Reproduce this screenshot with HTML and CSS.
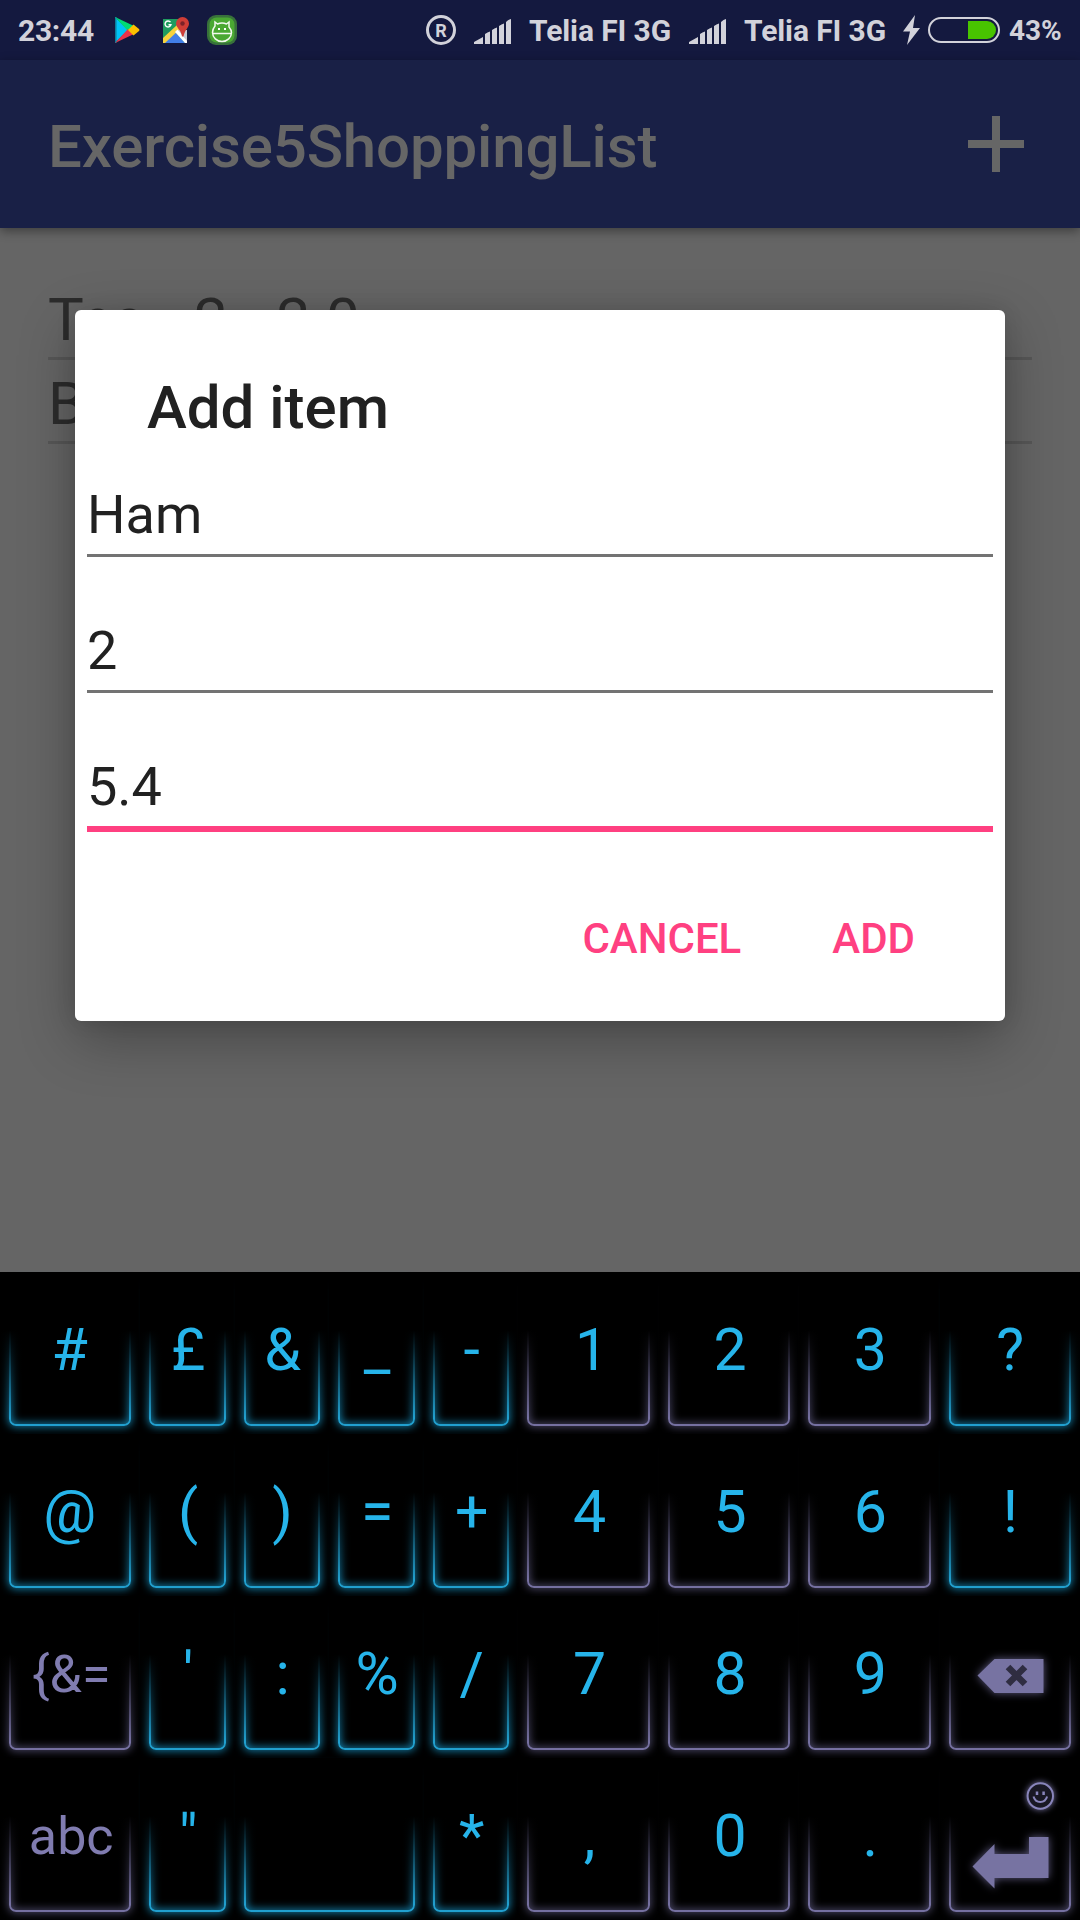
FILE: index.html
```html
<!DOCTYPE html>
<html lang="en">
<head>
<meta charset="utf-8">
<title>Exercise5ShoppingList</title>
<link rel="stylesheet" href="styles.css">
</head>
<body>
<div class="screen">
  <header class="status">
    <span class="clock">23:44</span>
    <svg class="ic-play" width="26" height="28" viewBox="0 0 26 28"><path fill="#00c3f5" d="M1 1v26l13-13z"/><path fill="#0b7f9b" d="M1 1h1.500v26H1z"/><path fill="#00dc74" d="M1 1l19 9-6 5z"/><path fill="#ea3348" d="M1 27l19-9-6-5z"/><path fill="#fcc000" d="M19.500 8.500L25 13q1 1 0 2l-5.500 4.500L14 14z"/></svg>
    <svg class="ic-maps" width="28" height="28" viewBox="0 0 28 28"><path fill="#1f9c5f" d="M2 3h22v24H2z"/><path fill="#c9cbd3" d="M16 14h10v12l-2 1z"/><path fill="#427fe8" d="M3 27l11-11 10 11z"/><path fill="#f7d33c" d="M2 22L16 9l3 4L4 27H2z"/><path fill="#fff" d="M14 16l2.500-2.500L26 25v2h-2z"/><path fill="none" stroke="#fff" stroke-width="1.400" d="M9.500 6.200a3 3 0 1 0 .5 2.500H7.500"/><path fill="#cf3d36" d="M21.500 1a6.500 6.500 0 0 1 6.500 6.500c0 4-4 6-5.500 13h-1.500c-1-7-6-9-6-13A6.500 6.500 0 0 1 21.500 1z"/><circle cx="21.500" cy="7.500" r="2.200" fill="#7b2228"/></svg>
    <svg class="ic-robot" width="30" height="30" viewBox="0 0 30 30"><rect width="30" height="30" rx="9" fill="#38713b"/><rect x="2.500" y="2.500" width="25" height="25" rx="7" fill="#4aa832"/><g fill="none" stroke="#f2f8ee" stroke-width="1.500"><path d="M8 11V7l2.500 2q4.500-2 9 0L22 7v5q2.500 3 2.500 5.500a9.500 9 0 0 1-19 0Q5.500 14 8 11z"/><path d="M6 18.500h18"/></g><path fill="#fff" d="M11 13h2v2h-2zM17 13h2v2h-2z"/></svg>
    <span class="registered">R</span>
    <svg class="signal" width="38" height="26" viewBox="0 0 38 26"><path d="M0 26v-2l9-5v7zM11 26V16q2.500-2 5-2.500V26zM18 26V12q2.500-2 5-2.500V26zM25 26V8q2.500-2 5-2.500V26zM32 26V4q2.500-2.500 5-3v25z"/></svg>
    <span class="carrier">Telia FI 3G</span>
    <svg class="signal signal-second" width="38" height="26" viewBox="0 0 38 26"><path d="M0 26v-2l9-5v7zM11 26V16q2.500-2 5-2.500V26zM18 26V12q2.500-2 5-2.500V26zM25 26V8q2.500-2 5-2.500V26zM32 26V4q2.500-2.500 5-3v25z"/></svg>
    <span class="carrier">Telia FI 3G</span>
    <svg class="bolt" width="18" height="30" viewBox="0 0 18 30"><path d="M12 0L0 16.500h7L4 30 17 13h-7z"/></svg>
    <span class="battery"><span class="battery-level"></span></span>
    <span class="percent">43%</span>
  </header>

  <div class="appbar">
    <h1 class="app-title">Exercise5ShoppingList</h1>
    <svg class="plus" width="56" height="56" viewBox="0 0 56 56"><path d="M24 0h8v24h24v8H32v24h-8V32H0v-8h24z"/></svg>
  </div>

  <main class="content">
    <div class="list-row">Tea - 2 - 2.0</div>
    <div class="list-row">B</div>
    <section class="dialog">
      <h2 class="dialog-title">Add item</h2>
      <div class="field">Ham</div>
      <div class="field">2</div>
      <div class="field field-focused">5.4</div>
      <div class="actions"><span class="action">CANCEL</span><span class="action">ADD</span></div>
    </section>
  </main>

  <div class="keyboard">
    <div class="key wide"><span>#</span></div>
    <div class="key"><span>£</span></div>
    <div class="key"><span>&amp;</span></div>
    <div class="key"><span>_</span></div>
    <div class="key"><span>-</span></div>
    <div class="key dim one"><span>1</span></div>
    <div class="key dim"><span>2</span></div>
    <div class="key dim"><span>3</span></div>
    <div class="key"><span>?</span></div>

    <div class="key wide"><span>@</span></div>
    <div class="key"><span>(</span></div>
    <div class="key"><span>)</span></div>
    <div class="key"><span>=</span></div>
    <div class="key"><span>+</span></div>
    <div class="key dim"><span>4</span></div>
    <div class="key dim"><span>5</span></div>
    <div class="key dim"><span>6</span></div>
    <div class="key"><span>!</span></div>

    <div class="key dim mode"><span>{&amp;=</span></div>
    <div class="key"><span>'</span></div>
    <div class="key"><span>:</span></div>
    <div class="key"><span>%</span></div>
    <div class="key"><span>/</span></div>
    <div class="key dim"><span>7</span></div>
    <div class="key dim"><span>8</span></div>
    <div class="key dim"><span>9</span></div>
    <div class="key dim"><svg class="key-icon" width="140" height="162" viewBox="0 0 140 162"><path class="solid" d="M37.500 79.500L54.500 63H103.500v34H54.500z"/><path class="cross" d="M68 71l17 17M85 71L68 88"/></svg></div>

    <div class="key dim mode"><span>abc</span></div>
    <div class="key"><span>"</span></div>
    <div class="key space"></div>
    <div class="key"><span>*</span></div>
    <div class="key dim"><span>,</span></div>
    <div class="key dim"><span>0</span></div>
    <div class="key dim"><span>.</span></div>
    <div class="key dim"><svg class="key-icon" width="140" height="162" viewBox="0 0 140 162"><path class="solid" d="M32.500 108.500L54.500 86v10h34.500V79h19.500v41h-54v10.500z"/><g class="smile"><circle cx="100.300" cy="38" r="12.700"/><path d="M93.500 38.500q1.500 5.500 6.800 5.500t6.800-5.500"/><path class="eyes" d="M97 33.500v3.500M103.600 33.500v3.500"/></g></svg></div>
  </div>
</div>
</body>
</html>
```
FILE: styles.css
```css
* { box-sizing: border-box; }

body {
  margin: 0;
  background: #000;
  font-family: Roboto, "Liberation Sans", sans-serif;
}

.screen {
  width: 1080px;
  height: 1920px;
  display: flex;
  flex-direction: column;
  overflow: hidden;
}

/* Status bar */
.status {
  flex: none;
  height: 60px;
  padding-left: 18px;
  display: flex;
  align-items: center;
  background: #14193f;
  color: #d2d2da;
  font-size: 30px;
  font-weight: 700;
  letter-spacing: -.1px;
  line-height: 61px;
  white-space: nowrap;
}
.status > * { flex: none; }
.clock { width: 96px; letter-spacing: -.3px; }
.ic-maps { margin-left: 21px; }
.ic-robot { margin-left: 18px; }
.registered {
  width: 30px;
  height: 30px;
  margin-left: 189px;
  border: 3px solid #d2d2da;
  border-radius: 50%;
  font-size: 18px;
  line-height: 25px;
  text-align: center;
}
.signal { margin: 1px 0 0 18px; fill: #d2d2da; }
.carrier { width: 142px; margin-left: 17px; }
.signal-second { margin-left: 18px; }
.bolt { margin-left: 17px; fill: #d2d2da; }
.battery {
  width: 72px;
  height: 26px;
  margin-left: 7px;
  padding: 2px;
  display: flex;
  justify-content: flex-end;
  border: 2px solid #d2d2da;
  border-radius: 13px;
}
.battery-level {
  width: 28px;
  height: 18px;
  border-radius: 0 9px 9px 0;
  background: #48c400;
}
.percent { margin-left: 9px; font-size: 28px; }

/* App bar */
.appbar {
  position: relative;
  z-index: 1;
  flex: none;
  height: 168px;
  padding: 0 56px 0 48px;
  display: flex;
  align-items: center;
  justify-content: space-between;
  background: #192046;
  box-shadow: 0 3px 10px rgba(0, 0, 0, .4);
}
.app-title {
  margin: 6px 0 0;
  color: #666;
  font-size: 60px;
  font-weight: 500;
  letter-spacing: -.15px;
  line-height: 70px;
}
.plus { fill: #666; }

/* Dimmed list behind the dialog */
.content {
  position: relative;
  z-index: 0;
  flex: none;
  height: 1044px;
  padding: 48px 48px 0;
  background: #656565;
}
.list-row {
  height: 84px;
  border-bottom: 3px solid #575757;
  color: #2c2c2c;
  font-size: 60px;
  line-height: 87px;
  word-spacing: 1.2px;
}

.dialog {
  position: absolute;
  left: 75px;
  top: 82px;
  width: 930px;
  height: 711px;
  padding: 63px 12px 0;
  border-radius: 6px;
  background: #fff;
  box-shadow: 0 18px 56px rgba(0, 0, 0, .3), 0 0 20px rgba(0, 0, 0, .1);
}
.dialog-title {
  margin: 0 0 27px;
  padding-left: 60px;
  color: #212121;
  font-size: 60px;
  font-weight: 500;
  line-height: 70px;
}
.field {
  height: 87px;
  margin-bottom: 49px;
  border-bottom: 3px solid #737373;
  color: #212121;
  font-size: 54px;
  line-height: 90px;
}
.field-focused {
  height: 90px;
  margin-bottom: 72px;
  border-bottom: 6px solid #ff4081;
}
.actions {
  padding-right: 78px;
  display: flex;
  justify-content: flex-end;
  gap: 91px;
  color: #ff4081;
  font-size: 42px;
  font-weight: 500;
  line-height: 70px;
}

/* Keyboard */
.keyboard {
  flex: none;
  height: 648px;
  display: grid;
  grid-template-columns: 140.4px repeat(4, 94.5px) repeat(4, 140.4px);
  grid-template-rows: repeat(4, 162px);
  background: #000;
}
.key {
  --edge: #219fce;
  --glow: rgba(24, 150, 200, .8);
  position: relative;
  isolation: isolate;
  color: #26b4ea;
  font-size: 59px;
  line-height: 156px;
  text-align: center;
}
.key span { padding-left: 1px; }
.dim {
  --edge: #7570a0;
  --glow: rgba(117, 112, 160, .62);
}
.dim span { padding-left: 2px; }
.one span { padding-left: 6px; }
.wide span { padding: 0 1px 0 0; }
.mode {
  color: #807cb0;
  font-size: 52px;
  line-height: 158px;
}
.space { grid-column: span 2; }

/* Neon outline: lit at the bottom and fading out towards the top */
.key::before {
  content: "";
  position: absolute;
  inset: 9px 9px 8.500px;
  border: 2px solid var(--edge);
  border-radius: 7px;
  box-shadow: 0 0 9px 1px var(--glow), inset 0 0 9px 1px var(--glow);
  z-index: -2;
}
.key::after {
  content: "";
  position: absolute;
  inset: 0;
  background: linear-gradient(#000 36%, rgba(0, 0, 0, .75) 50%, rgba(0, 0, 0, .4) 68%, rgba(0, 0, 0, 0) 90%);
  z-index: -1;
}

.key-icon { display: block; }
.solid { fill: #7773a2; filter: drop-shadow(0 0 4px rgba(117, 112, 160, .8)); }
.cross { stroke: #2f2d41; stroke-width: 6.500; }
.smile {
  fill: none;
  stroke: #8985bb;
  stroke-width: 2;
  filter: drop-shadow(0 0 3px #7773a2);
}
.smile circle { fill: #191824; }
.smile .eyes { stroke-width: 2.500; }
```
